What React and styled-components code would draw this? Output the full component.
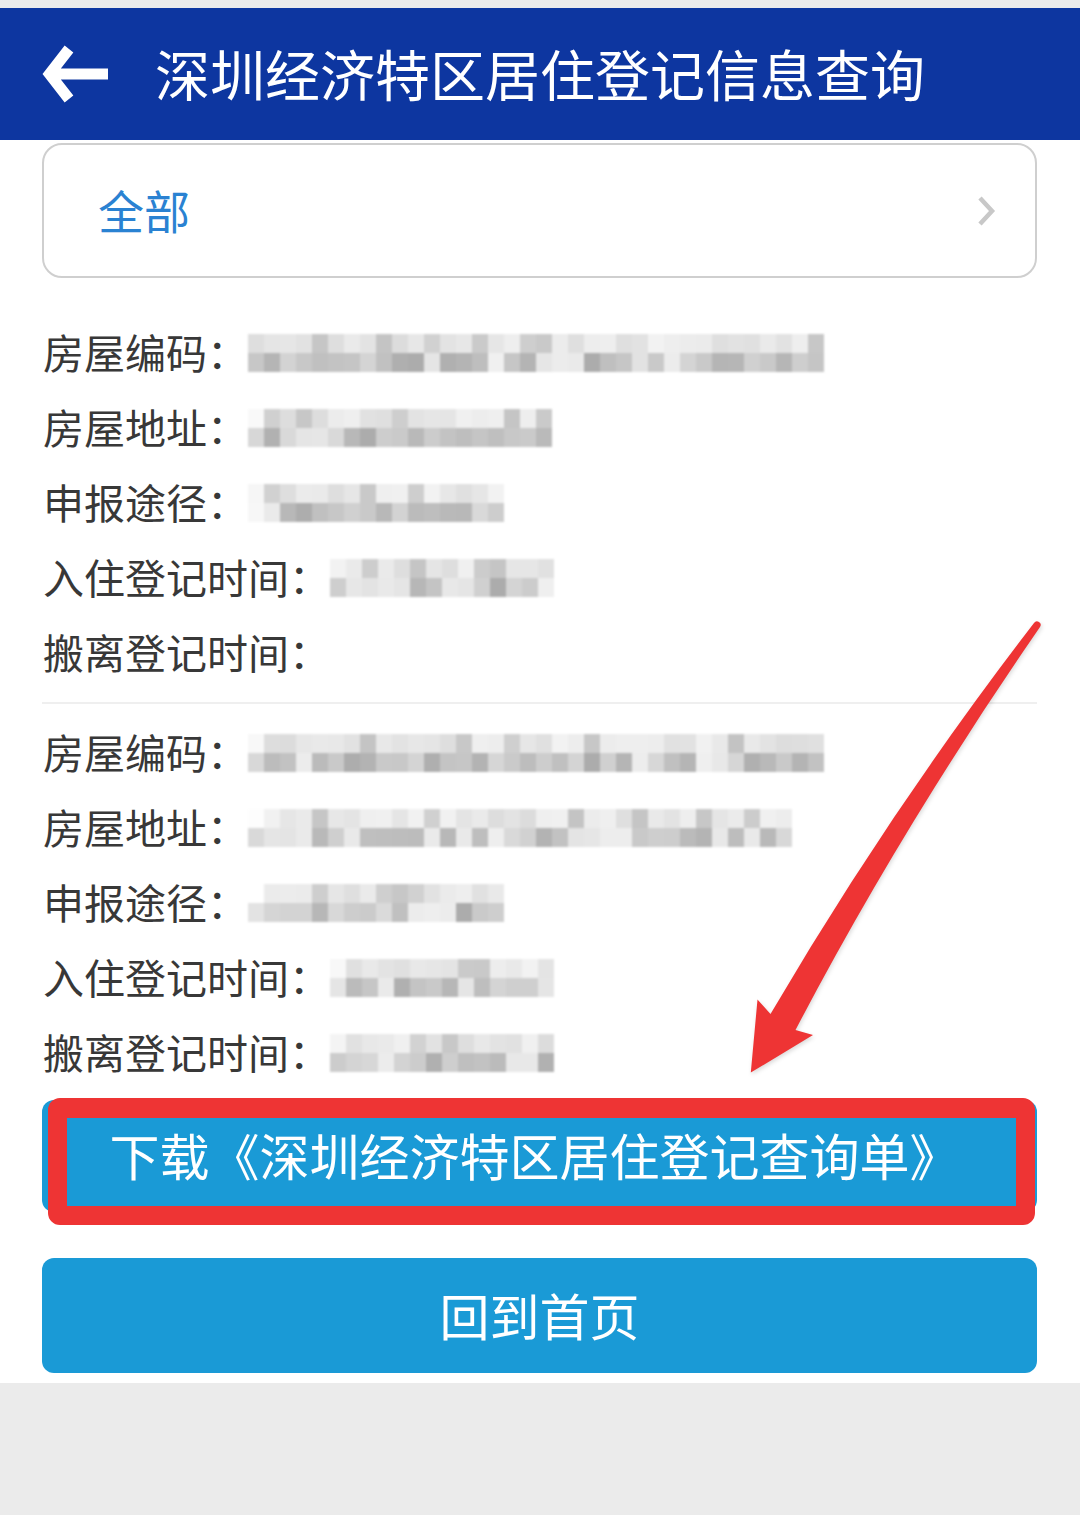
import React from "react";
import styled, { createGlobalStyle } from "styled-components";

const GlobalStyle = createGlobalStyle`
  html, body { margin: 0; padding: 0; }
  body {
    background: #ebebeb;
    font-family: "Noto Sans CJK SC", "Noto Sans", sans-serif;
  }
`;

const Page = styled.div`
  position: relative;
  width: 1080px;
  min-height: 1515px;
  padding-top: 8px;
  box-sizing: border-box;
  background: #ebebeb;
`;

const Header = styled.header`
  height: 132px;
  background: #0d36a0;
  display: flex;
  align-items: center;
  padding-left: 42px;
  gap: 47px;
  box-sizing: border-box;
`;

const BackIcon = styled.svg`
  width: 66px;
  height: 58px;
  flex: none;
`;

const Title = styled.h1`
  margin: 0 0 4px;
  font-size: 55px;
  font-weight: 400;
  line-height: 1;
  color: #ffffff;
  white-space: nowrap;
`;

const Main = styled.main`
  background: #ffffff;
  padding: 3px 43px 10px 42px;
`;

const Select = styled.div`
  height: 135px;
  box-sizing: border-box;
  border: 2px solid #cfcfcf;
  border-radius: 20px;
  display: flex;
  align-items: center;
  justify-content: space-between;
  padding: 0 37px 4px 54px;
`;

const SelectText = styled.span`
  font-size: 46px;
  line-height: 1;
  color: #2a82d2;
`;

const Chevron = styled.svg`
  width: 22px;
  height: 32px;
  margin-top: 4px;
`;

const Group = styled.section`
  padding: ${(p) => (p.$first ? "37px 0 12px" : "11px 0 0")};
  border-bottom: ${(p) => (p.$first ? "2px solid #efefef" : "none")};
`;

const Row = styled.div`
  height: 75px;
  display: flex;
  align-items: center;
`;

const Label = styled.span`
  font-size: 41px;
  line-height: 1;
  color: #383838;
  white-space: nowrap;
  padding-left: 1px;
  margin-bottom: 3px;
`;

const Mosaic = styled.div`
  display: grid;
  grid-template-columns: repeat(${(p) => p.$cols}, 16px);
  grid-auto-rows: 19px;
  filter: blur(1.1px);
`;

const Cell = styled.span`
  display: block;
`;

const Button = styled.button`
  position: relative;
  display: flex;
  align-items: center;
  justify-content: center;
  width: 100%;
  height: ${(p) => p.$h}px;
  margin-top: ${(p) => p.$mt}px;
  border: none;
  border-radius: 12px;
  background: #1a9ad6;
  color: #ffffff;
  font-family: "Noto Sans CJK SC", "Noto Sans", sans-serif;
  font-size: 50px;
  line-height: 1;
  padding: 0 ${(p) => p.$shift || 0}px 4px 0;
`;

const RedBox = styled.span`
  position: absolute;
  left: 6px;
  top: -2px;
  right: 2px;
  bottom: -13px;
  border: 19px solid #ee3434;
  border-top-width: 20px;
  border-radius: 12px;
  pointer-events: none;
`;

const Annotation = styled.svg`
  position: absolute;
  left: 740px;
  top: 615px;
  width: 310px;
  height: 465px;
  pointer-events: none;
  filter: drop-shadow(1px 2px 2px rgba(0, 0, 0, 0.15));
`;

function mulberry32(a) {
  return function () {
    a |= 0;
    a = (a + 0x6d2b79f5) | 0;
    let t = Math.imul(a ^ (a >>> 15), 1 | a);
    t = (t + Math.imul(t ^ (t >>> 7), 61 | t)) ^ t;
    return ((t ^ (t >>> 14)) >>> 0) / 4294967296;
  };
}

function makeCells(cols, rows, seed) {
  const r = mulberry32(seed * 9973 + 17);
  const out = [];
  for (let y = 0; y < rows; y++) {
    for (let x = 0; x < cols; x++) {
      let v;
      const q = r();
      if (y === 0) {
        v = q < 0.2 ? 195 + r() * 15 : 220 + r() * 22;
      } else {
        v = q < 0.2 ? 226 + r() * 14 : 172 + r() * 46;
      }
      if (x === 0) v = Math.min(255, v + 18);
      v = Math.round(v);
      out.push(`rgb(${v},${v},${v})`);
    }
  }
  return out;
}

function BlurValue({ cols, rows, seed }) {
  if (!cols) return null;
  const cells = makeCells(cols, rows, seed);
  return (
    <Mosaic $cols={cols}>
      {cells.map((c, i) => (
        <Cell key={i} style={{ background: c }} />
      ))}
    </Mosaic>
  );
}

const group1 = [
  { label: "房屋编码", cols: 36, rows: 2, seed: 1 },
  { label: "房屋地址", cols: 19, rows: 2, seed: 2 },
  { label: "申报途径", cols: 16, rows: 2, seed: 3 },
  { label: "入住登记时间", cols: 14, rows: 2, seed: 4 },
  { label: "搬离登记时间", cols: 0, rows: 0, seed: 5 },
];

const group2 = [
  { label: "房屋编码", cols: 36, rows: 2, seed: 6 },
  { label: "房屋地址", cols: 34, rows: 2, seed: 7 },
  { label: "申报途径", cols: 16, rows: 2, seed: 8 },
  { label: "入住登记时间", cols: 14, rows: 2, seed: 9 },
  { label: "搬离登记时间", cols: 14, rows: 2, seed: 10 },
];

function InfoGroup({ items, first }) {
  return (
    <Group $first={first}>
      {items.map((it, i) => (
        <Row key={i}>
          <Label>{it.label}：</Label>
          <BlurValue cols={it.cols} rows={it.rows} seed={it.seed} />
        </Row>
      ))}
    </Group>
  );
}

export default function App() {
  return (
    <Page>
      <GlobalStyle />
      <Header>
        <BackIcon viewBox="0 0 66 58">
          <path
            d="M27 4 L7.5 29 L27 54 M7.5 29 H66"
            fill="none"
            stroke="#ffffff"
            strokeWidth="11"
            strokeLinejoin="miter"
            strokeLinecap="butt"
          />
        </BackIcon>
        <Title>深圳经济特区居住登记信息查询</Title>
      </Header>
      <Main>
        <Select>
          <SelectText>全部</SelectText>
          <Chevron viewBox="0 0 22 32">
            <path d="M4 3 L16 16 L4 29" fill="none" stroke="#c8c8c8" strokeWidth="4.5" />
          </Chevron>
        </Select>
        <InfoGroup items={group1} first />
        <InfoGroup items={group2} />
        <Button $h={112} $mt={10} $shift={10}>
          下载《深圳经济特区居住登记查询单》
          <RedBox />
        </Button>
        <Button $h={115} $mt={46}>回到首页</Button>
      </Main>
      <Annotation viewBox="740 615 310 465">
        <path
          d="M1034 623 A3.2 3.2 0 0 1 1040 627 Q 900 830 795.5 1030 L813 1035 L750.8 1072.6 L757.5 999.5 L770.5 1014 Q 890 810 1034 623 Z"
          fill="#ee3434"
        />
      </Annotation>
    </Page>
  );
}
